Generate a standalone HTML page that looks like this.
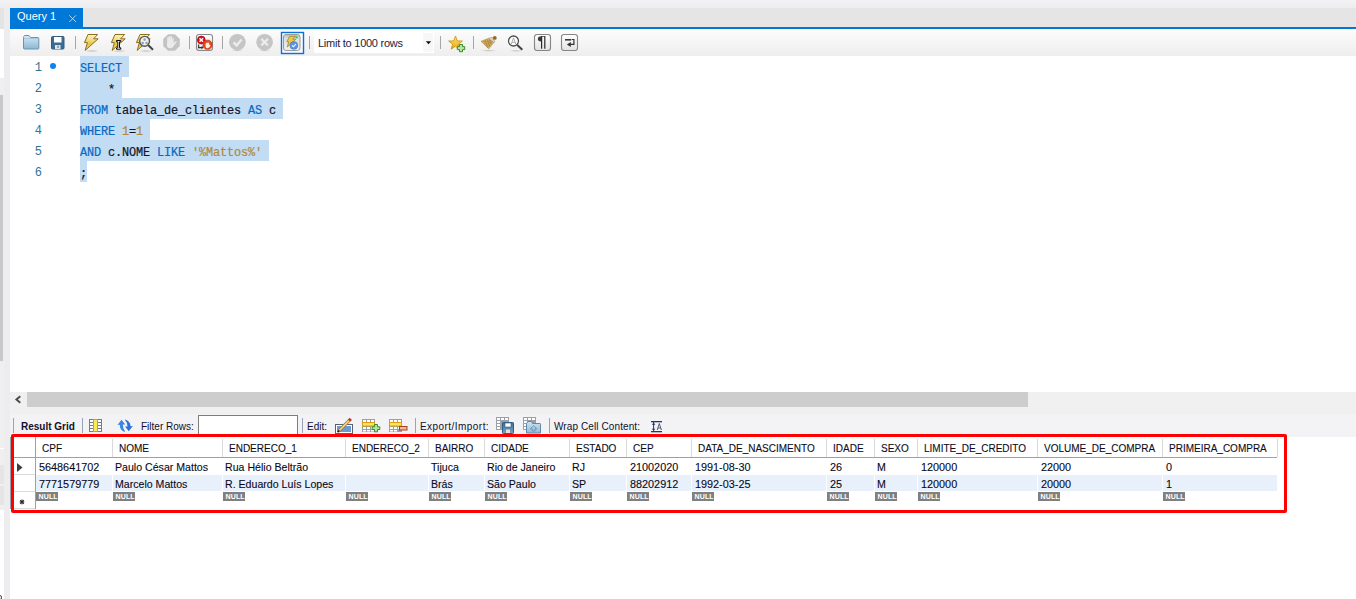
<!DOCTYPE html>
<html><head><meta charset="utf-8">
<style>
*{box-sizing:border-box}
html,body{margin:0;padding:0}
body{width:1356px;height:599px;overflow:hidden;position:relative;background:#fff;font-family:"Liberation Sans",sans-serif}
.a{position:absolute}
.sep{position:absolute;width:1px;background:#a9a9a9}
.mono{font-family:"Liberation Mono",monospace}
#code div{position:absolute;left:0;height:21px;white-space:pre;-webkit-text-stroke:0.2px currentColor}
.k{color:#0569c4}
.s{color:#b0893e}
.i{color:#14142a}
.sel{position:absolute;background:#c1dcf3}
.ln{position:absolute;left:26px;width:16px;text-align:right;color:#2f7391;font-size:12px}
.tb{font-size:10px;color:#10102a;position:absolute;white-space:nowrap}
.hd{position:absolute;top:437px;height:20px;font-size:10px;color:#0c0c20;white-space:nowrap;-webkit-text-stroke:0.1px #0c0c20}
.cell{position:absolute;font-size:10.5px;color:#080818;white-space:nowrap;-webkit-text-stroke:0.1px #080818}
.null{position:absolute;top:492px;width:22px;height:9px;background:#808080;color:#fff;font-size:7px;font-weight:bold;line-height:9px;padding-left:2.5px;letter-spacing:0.15px}
.vl{position:absolute;top:439px;height:18px;width:1px;background:#dadada}
</style></head>
<body>
<!-- top strip -->
<div class="a" style="left:0;top:0;width:1356px;height:8px;background:linear-gradient(#f3f3f5,#ededf0)"></div>
<!-- left strip -->
<div class="a" style="left:0;top:8px;width:10px;height:591px;background:#ededf0"></div>
<div class="a" style="left:0;top:8px;width:4px;height:21px;background:#e4e4e4"></div>
<div class="a" style="left:0;top:29px;width:4px;height:49px;background:#fff"></div>
<div class="a" style="left:0;top:78px;width:4px;height:17px;background:#efefef"></div>
<div class="a" style="left:0;top:95px;width:3px;height:266px;background:#c8c8c8"></div>
<div class="a" style="left:0;top:361px;width:4px;height:149px;background:#efefef"></div>
<div class="a" style="left:0;top:448px;width:4px;height:1px;background:#fff"></div>
<div class="a" style="left:0;top:465px;width:4px;height:19px;background:#e5e5e5"></div>
<div class="a" style="left:0;top:486px;width:4px;height:19px;background:#e5e5e5"></div>
<div class="a" style="left:0;top:510px;width:4px;height:89px;background:#fff"></div>
<div class="a" style="left:10px;top:437px;width:1px;height:72px;background:#9aa0a8"></div>
<div class="a" style="left:-2px;top:595px;width:4px;height:5px;border:1px solid #4a4a5a;border-radius:2px;background:#f4f0e0"></div>

<!-- tab bar -->
<div class="a" style="left:10px;top:8px;width:1346px;height:19px;background:#e5e5e5"></div>
<div class="a" style="left:10px;top:27px;width:1346px;height:2px;background:#0078d7"></div>
<div class="a" style="left:10px;top:8px;width:73px;height:21px;background:#0078d7"></div>
<div class="a" style="left:17px;top:8.4px;font-size:11px;color:#fff;line-height:16px">Query 1</div>
<svg class="a" style="left:69px;top:15px" width="8" height="8" viewBox="0 0 8 8"><path d="M0.3 0.3L7 7M7 0.3L0.3 7" stroke="#c4dcf4" stroke-width="0.9"/></svg>

<!-- toolbar -->
<div class="a" style="left:10px;top:29px;width:1346px;height:27px;background:linear-gradient(#fcfcfc,#eeeeee)"></div>
<svg class="a" style="left:0;top:0" width="600" height="56" viewBox="0 0 600 56">
<defs>
<linearGradient id="gFold" x1="0" y1="0" x2="0" y2="1"><stop offset="0" stop-color="#d6e9f6"/><stop offset="1" stop-color="#8db6d3"/></linearGradient>
<linearGradient id="gBolt" x1="0" y1="0" x2="0" y2="1"><stop offset="0" stop-color="#fbf3c8"/><stop offset="0.35" stop-color="#f0dc80"/><stop offset="0.6" stop-color="#e3c448"/><stop offset="1" stop-color="#f0dc80"/></linearGradient>
<linearGradient id="gBtn" x1="0" y1="0" x2="0" y2="1"><stop offset="0" stop-color="#ffffff"/><stop offset="1" stop-color="#e2e2e2"/></linearGradient>
<linearGradient id="gAc" x1="0" y1="0" x2="0" y2="1"><stop offset="0" stop-color="#bdbdbd"/><stop offset="0.25" stop-color="#dedede"/><stop offset="1" stop-color="#efefef"/></linearGradient>
<linearGradient id="gStar" x1="0" y1="0" x2="0" y2="1"><stop offset="0" stop-color="#fbe27a"/><stop offset="0.5" stop-color="#f5c838"/><stop offset="1" stop-color="#e8a018"/></linearGradient>
<radialGradient id="gShadow" cx="0.5" cy="0.5" r="0.5"><stop offset="0" stop-color="#000" stop-opacity="0.18"/><stop offset="1" stop-color="#000" stop-opacity="0"/></radialGradient>
</defs>
<!-- folder -->
<path d="M23.5 37.5Q23.5 36.5 24.5 35.5L29 35.5L30.5 37.5L38 37.5Q38.8 37.5 38.8 38.5L38.8 48.2Q38.8 49 38 49L24.5 49Q23.5 49 23.5 48Z" fill="url(#gFold)" stroke="#6b94b3" stroke-width="1"/>
<path d="M24 38.5L38.3 38.5" stroke="#a9c9e0" stroke-width="1"/>
<!-- floppy -->
<rect x="51.5" y="36.5" width="12.5" height="12.5" rx="1" fill="#3e6c91" stroke="#335c7c" stroke-width="1"/>
<rect x="54" y="37" width="7.5" height="5.5" fill="#ffffff"/>
<rect x="55" y="45" width="5.5" height="4" fill="#dfe6ec"/>
<rect x="57.5" y="45.5" width="1" height="2.5" fill="#3e6c91"/>
<!-- sep -->
<rect x="75" y="36" width="1" height="13" fill="#a6a6a6"/>
<!-- bolt 1 -->
<ellipse cx="92" cy="51" rx="7" ry="1.6" fill="url(#gShadow)"/>
<path d="M88 34.5L97.6 34.5L93.6 38.8L98.2 38.8L85.2 50.4L87.4 42.6L84.4 42.6Z" fill="url(#gBolt)" stroke="#8e6d1e" stroke-width="1"/>
<!-- bolt 2 w/ cursor -->
<ellipse cx="119" cy="51" rx="7" ry="1.6" fill="url(#gShadow)"/>
<path transform="translate(27 0)" d="M88 34.5L97.6 34.5L93.6 38.8L98.2 38.8L85.2 50.4L87.4 42.6L84.4 42.6Z" fill="url(#gBolt)" stroke="#8e6d1e" stroke-width="1"/>
<path d="M116.5 40.5L120.8 40.5L120.8 41.8L119.5 41.8L119.5 47.8L120.8 47.8L120.8 49.2L116.5 49.2L116.5 47.8L117.8 47.8L117.8 41.8L116.5 41.8Z" fill="#fff" stroke="#111" stroke-width="1"/>
<!-- bolt 3 w/ magnifier -->
<ellipse cx="146" cy="51" rx="7" ry="1.6" fill="url(#gShadow)"/>
<path transform="translate(52 0)" d="M88 34.5L97.6 34.5L93.6 38.8L98.2 38.8L85.2 50.4L87.4 42.6L84.4 42.6Z" fill="url(#gBolt)" stroke="#8e6d1e" stroke-width="1"/>
<circle cx="144.6" cy="41.3" r="4.9" fill="#f7f2d8" stroke="#555" stroke-width="1.4"/>
<circle cx="144.6" cy="39.6" r="1.3" fill="#7ea6dc"/>
<circle cx="142.7" cy="43" r="1.3" fill="#7ea6dc"/>
<circle cx="146.6" cy="43" r="1.3" fill="#7ea6dc"/>
<path d="M148.3 45.2L153 49.7" stroke="#444" stroke-width="2"/>
<!-- stop hand gray -->
<path d="M168 34.2L175 34.2L179.8 39L179.8 46L175 50.8L168 50.8L163.2 46L163.2 39Z" fill="#c3c3c3"/>
<path d="M167.2 40.5L167.2 37.5Q167.2 37 168 37Q168.6 37 168.6 37.5L168.6 40L168.8 36.5Q168.8 35.9 169.6 35.9Q170.3 35.9 170.3 36.5L170.3 40L170.6 36.7Q170.6 36.1 171.3 36.1Q172 36.1 172 36.8L172 41L172.4 38.3Q172.5 37.7 173.1 37.7Q173.7 37.8 173.7 38.4L173.7 43L175.4 41.3Q176 40.7 176.6 41.2Q177 41.7 176.5 42.3L173.2 46.8Q172.2 48.3 170.2 48.3Q166.9 48.3 166.9 45Z" fill="#eaeaea"/>
<!-- sep -->
<rect x="189" y="36" width="1" height="13" fill="#a6a6a6"/>
<!-- stop on error -->
<rect x="196.5" y="34.5" width="16" height="16" rx="2.5" fill="url(#gBtn)" stroke="#8a8a8a" stroke-width="1.1"/>
<circle cx="201.3" cy="40" r="3.9" fill="#d8101c" stroke="#a8000c" stroke-width="0.7"/>
<path d="M199.5 38.2L203.1 41.8M203.1 38.2L199.5 41.8" stroke="#fff" stroke-width="1.5"/>
<path d="M205.6 40.2L209.4 40.2L212 42.8L212 46.6L209.4 49.2L205.6 49.2L203 46.6L203 42.8Z" fill="#ea4a1a" stroke="#c02a0a" stroke-width="0.7"/>
<path d="M205.7 47Q205.3 44.3 205.9 43.3Q206.5 42.4 207.5 42.8Q208.5 42.2 209.1 43.2L209.3 44.9Q210.3 44.3 210.5 45.3Q210 48 207.7 48.2Q206 48.2 205.7 47Z" fill="#fbeee8"/>
<path d="M198.6 44.6L198.6 47.6L202.2 47.6" stroke="#333" stroke-width="1.1" fill="none"/>
<path d="M203.6 47.6L201.6 46L201.6 49.2Z" fill="#333"/>
<!-- sep -->
<rect x="222" y="36" width="1" height="13" fill="#a6a6a6"/>
<!-- check circle gray -->
<ellipse cx="237.4" cy="50.5" rx="6" ry="1.2" fill="url(#gShadow)"/>
<circle cx="237.4" cy="42.2" r="8.3" fill="#c5c5c5"/>
<path d="M233.6 42.3L236.6 45.4L241.6 39.4" stroke="#ececec" stroke-width="2.4" fill="none"/>
<!-- x circle gray -->
<ellipse cx="264.6" cy="50.5" rx="6" ry="1.2" fill="url(#gShadow)"/>
<circle cx="264.6" cy="42.2" r="8.3" fill="#c5c5c5"/>
<path d="M261.3 38.9L267.9 45.5M267.9 38.9L261.3 45.5" stroke="#ececec" stroke-width="2.2"/>
<!-- autocommit selected -->
<rect x="281.5" y="32.5" width="22" height="21" fill="#ffffff" fill-opacity="0.6" stroke="#0a72d6" stroke-width="1.4"/>
<rect x="283.5" y="34.5" width="16.5" height="16" rx="2.5" fill="url(#gAc)" stroke="#9a9a9a" stroke-width="1"/>
<path d="M289.5 36.3L295.5 36.3L292.8 39.2L295.8 39.2L287.3 47L288.7 41.8L286.8 41.8Z" fill="#e8c850" stroke="#9a7a20" stroke-width="0.7"/>
<circle cx="293.9" cy="45.4" r="3.9" fill="#5b95e0" stroke="#3f78c4" stroke-width="0.6"/>
<path d="M292 45.4L293.4 46.8L295.9 44" stroke="#fff" stroke-width="1.1" fill="none"/>
<circle cx="296.6" cy="37.4" r="1.1" fill="#34c634"/>
<!-- sep -->
<rect x="309" y="36" width="1" height="13" fill="#a6a6a6"/>
<!-- combo -->
<rect x="314" y="32" width="120" height="21" fill="#ffffff"/>
<rect x="423" y="33" width="10" height="19" fill="#f7f7f7"/>
<path d="M425.8 41.2L431.2 41.2L428.5 44.2Z" fill="#111"/>
<!-- sep -->
<rect x="440" y="36" width="1" height="13" fill="#a6a6a6"/>
<!-- star plus -->
<path d="M455.5 36.0L457.3 40.9L462.4 41.0L458.4 44.2L459.8 49.2L455.5 46.3L451.2 49.2L452.6 44.2L448.6 41.0L453.7 40.9Z" fill="url(#gStar)" stroke="#c98c12" stroke-width="0.8" stroke-linejoin="round"/>
<path d="M459.5 44.5L462.5 44.5L462.5 46.6L464.7 46.6L464.7 49.6L462.5 49.6L462.5 51.7L459.5 51.7L459.5 49.6L457.3 49.6L457.3 46.6L459.5 46.6Z" fill="#b4e6a0" stroke="#3f8a2c" stroke-width="1"/>
<!-- sep -->
<rect x="473" y="36" width="1" height="13" fill="#a6a6a6"/>
<!-- broom -->
<ellipse cx="488.5" cy="50.6" rx="8.5" ry="1.3" fill="url(#gShadow)"/>
<path d="M481 41.3L488.6 38.3L493.8 42.6L488.8 48.8Z" fill="#dbb565" stroke="#a27c36" stroke-width="0.5"/>
<path d="M482.5 41.8L491.6 40.6M484 43.8L492.6 41.9M485.6 45.6L491.8 43.6M487.2 47.3L490.6 45.6M485 40L487.5 47.8M487.2 39.2L489.6 46M489.2 39.3L491 43.6" stroke="#9c7630" stroke-width="0.55" fill="none"/>
<path d="M488.6 38.3Q491 37 492.6 37.6L494.9 41.4Q494.7 42.6 493.8 42.6Z" fill="#d8d2c2" stroke="#8e8a7a" stroke-width="0.5"/>
<circle cx="494.8" cy="37.9" r="1.9" fill="#9c6818"/>
<!-- magnifier A -->
<ellipse cx="516" cy="50.8" rx="7" ry="1.2" fill="url(#gShadow)"/>
<circle cx="513.5" cy="41" r="5" fill="#ffffff" stroke="#505050" stroke-width="1.3"/>
<path d="M511.3 44L513.5 37.8L515.7 44M512 42.3L515 42.3" stroke="#9a9a9a" stroke-width="0.8" fill="none"/>
<path d="M517.3 45L522.3 49.8" stroke="#444" stroke-width="2"/>
<!-- pilcrow btn -->
<rect x="534.5" y="34.5" width="16" height="16" rx="2.5" fill="url(#gBtn)" stroke="#858585" stroke-width="1.1"/>
<path d="M541.2 36.2L545.2 36.2L545.2 36.9L541.2 36.9Z" fill="#333"/>
<path d="M541 36.2Q537.8 36.5 537.8 39Q537.8 41.3 541 41.5Z" fill="#3a3a3a"/>
<rect x="541" y="36.2" width="1.2" height="12.5" fill="#2a2a2a"/>
<rect x="544.2" y="36.2" width="1.2" height="12.5" fill="#2a2a2a"/>
<!-- wrap btn -->
<rect x="561.5" y="34.5" width="16" height="16" rx="2.5" fill="url(#gBtn)" stroke="#858585" stroke-width="1.1"/>
<rect x="565" y="39" width="6.2" height="1.6" fill="#3a3a3a"/>
<path d="M571.8 39.5L573.9 39.5L573.9 44.4L569.8 44.4" stroke="#333" stroke-width="1.2" fill="none"/>
<path d="M566.8 44.4L570.8 41.9L570.8 46.9Z" fill="#333"/>
</svg>
<div class="tb" style="left:318px;top:37px;font-size:11px;color:#1d1d3a;letter-spacing:-0.25px;line-height:12px">Limit to 1000 rows</div>


<!-- editor -->
<div class="a" style="left:10px;top:56px;width:1346px;height:336px;background:#fff"></div>
<div class="sel" style="left:80px;top:56px;width:49px;height:21px"></div>
<div class="sel" style="left:80px;top:77px;width:42px;height:21px"></div>
<div class="sel" style="left:80px;top:98px;width:203px;height:21px"></div>
<div class="sel" style="left:80px;top:119px;width:70px;height:21px"></div>
<div class="sel" style="left:80px;top:140px;width:189px;height:21px"></div>
<div class="sel" style="left:80px;top:161px;width:7px;height:21px"></div>
<div class="ln mono" style="top:58px;line-height:21px">1</div>
<div class="ln mono" style="top:79px;line-height:21px">2</div>
<div class="ln mono" style="top:100px;line-height:21px">3</div>
<div class="ln mono" style="top:121px;line-height:21px">4</div>
<div class="ln mono" style="top:142px;line-height:21px">5</div>
<div class="ln mono" style="top:163px;line-height:21px">6</div>
<div class="a" style="left:50px;top:63px;width:6px;height:6px;border-radius:50%;background:#0a84f0"></div>
<div id="code" class="a mono" style="left:80px;top:58.5px;font-size:11.9px;letter-spacing:-0.14px">
<div style="top:0px;line-height:21px"><span class="k">SELECT</span></div>
<div style="top:21px;line-height:21px">    <span class="i">*</span></div>
<div style="top:42px;line-height:21px"><span class="k">FROM</span> <span class="i">tabela_de_clientes</span> <span class="k">AS</span> <span class="i">c</span></div>
<div style="top:63px;line-height:21px"><span class="k">WHERE</span> <span class="s">1</span><span class="i">=</span><span class="s">1</span></div>
<div style="top:84px;line-height:21px"><span class="k">AND</span> <span class="i">c.NOME</span> <span class="k">LIKE</span> <span class="s">'%Mattos%'</span></div>
<div style="top:105px;line-height:21px"><span class="i">;</span></div>
</div>

<!-- h scrollbar -->
<div class="a" style="left:10px;top:392px;width:1346px;height:22px;background:#f0f0f0"></div>
<div class="a" style="left:27px;top:392px;width:1001px;height:15px;background:#cdcdcd"></div>
<svg class="a" style="left:14px;top:395px" width="8" height="9" viewBox="0 0 8 9"><path d="M6.3 1.2L2.4 4.5L6.3 7.8" stroke="#4a4a4a" stroke-width="1.9" fill="none"/></svg>

<!-- results toolbar -->
<div class="a" style="left:10px;top:414px;width:1346px;height:23px;background:#f3f3f6"></div>
<svg class="a" style="left:0;top:410px" width="700" height="27" viewBox="0 410 700 27">
<defs>
<linearGradient id="gFold2" x1="0" y1="0" x2="0" y2="1"><stop offset="0" stop-color="#cde3f2"/><stop offset="1" stop-color="#94bad6"/></linearGradient>
<linearGradient id="gFlop2" x1="0" y1="0" x2="0" y2="1"><stop offset="0" stop-color="#3d6b90"/><stop offset="1" stop-color="#7aa2c0"/></linearGradient>
</defs>
<rect x="13" y="418" width="1" height="15" fill="#9aa4b6"/>
<rect x="82" y="418" width="1" height="15" fill="#9aa4b6"/>
<!-- grid icon -->
<rect x="89" y="419" width="13" height="13" fill="#747c86"/>
<g fill="#ffffff">
<rect x="90" y="420" width="3" height="2"/><rect x="90" y="423" width="3" height="2"/><rect x="90" y="426" width="3" height="2"/><rect x="90" y="429" width="3" height="2"/>
<rect x="98" y="420" width="3" height="2"/><rect x="98" y="423" width="3" height="2"/><rect x="98" y="426" width="3" height="2"/><rect x="98" y="429" width="3" height="2"/>
</g>
<rect x="93.5" y="419.5" width="4" height="12" fill="#fde85a" stroke="#e09a10" stroke-width="1"/>
<!-- refresh -->
<path d="M124.5 432Q119.5 430 119.8 424.8L117.5 425L121.5 419.8L125.3 424.6L122.8 424.6Q122.8 428.5 125 431.5Z" fill="#3a86e0"/>
<path d="M125 419.5Q130.3 421 130.5 426.2L132.8 426L128.8 431.2L125 426.4L127.5 426.4Q127.5 422.5 125 420Z" fill="#2f6fd8"/>
<!-- filter input -->
<rect x="198.5" y="415.5" width="99" height="22" fill="#ffffff" stroke="#7d7d7d" stroke-width="1"/>
<rect x="302" y="418" width="1" height="15" fill="#9aa4b6"/>
<!-- edit icon -->
<rect x="335.5" y="424.5" width="17" height="9" fill="#ffffff" stroke="#5a6068" stroke-width="1"/>
<rect x="337" y="426" width="14" height="6" fill="#6a9ad6"/>
<path d="M338.6 431.2L349 420.6" stroke="#a27a34" stroke-width="3.2" stroke-linecap="butt"/>
<path d="M338.6 431.2L349 420.6" stroke="#f2d88a" stroke-width="1.6"/>
<path d="M349 420.6L350.8 418.8" stroke="#c8302a" stroke-width="3.2"/>
<path d="M337.6 432.2L339.4 430.4" stroke="#222" stroke-width="1.6"/>
<!-- add row -->
<rect x="362" y="419" width="13" height="13" fill="#9aa0a8"/>
<g fill="#fff">
<rect x="363" y="420" width="3" height="2"/><rect x="367" y="420" width="3" height="2"/><rect x="371" y="420" width="3" height="2"/>
<rect x="363" y="427" width="3" height="2"/><rect x="367" y="427" width="3" height="2"/><rect x="371" y="427" width="3" height="2"/>
<rect x="363" y="430" width="3" height="1.5"/><rect x="367" y="430" width="3" height="1.5"/><rect x="371" y="430" width="3" height="1.5"/>
</g>
<rect x="362.5" y="422.5" width="12" height="3.5" fill="#fde85a" stroke="#e09a10" stroke-width="1"/>
<path d="M374.5 424.5L377.5 424.5L377.5 426.8L379.8 426.8L379.8 429.5L377.5 429.5L377.5 431.8L374.5 431.8L374.5 429.5L372.2 429.5L372.2 426.8L374.5 426.8Z" fill="#b2e69c" stroke="#3f8a2c" stroke-width="1"/>
<!-- del row -->
<rect x="389" y="419" width="13" height="13" fill="#9aa0a8"/>
<g fill="#fff">
<rect x="390" y="420" width="3" height="2"/><rect x="394" y="420" width="3" height="2"/><rect x="398" y="420" width="3" height="2"/>
<rect x="390" y="427" width="3" height="2"/><rect x="394" y="427" width="3" height="2"/><rect x="398" y="427" width="3" height="2"/>
<rect x="390" y="430" width="3" height="1.5"/><rect x="394" y="430" width="3" height="1.5"/>
</g>
<rect x="389.5" y="422.5" width="12" height="3.5" fill="#fde85a" stroke="#e09a10" stroke-width="1"/>
<rect x="399.5" y="426.5" width="7.5" height="3.5" fill="#f8b898" stroke="#a8401a" stroke-width="1"/>
<rect x="415" y="418" width="1" height="15" fill="#9aa4b6"/>
<!-- export -->
<rect x="496" y="417" width="13" height="13" fill="#9aa0a8"/>
<g fill="#fff">
<rect x="497" y="418" width="3" height="2"/><rect x="501" y="418" width="3" height="2"/><rect x="505" y="418" width="3" height="2"/>
<rect x="497" y="421" width="3" height="2"/><rect x="497" y="424" width="3" height="2"/><rect x="497" y="427" width="3" height="2"/>
</g>
<rect x="502.5" y="422.5" width="11" height="11" rx="0.8" fill="url(#gFlop2)" stroke="#2f5f84" stroke-width="1"/>
<rect x="505" y="423" width="6" height="4" fill="#fff" stroke="#2f5f84" stroke-width="0.6"/>
<rect x="506" y="429.5" width="4" height="3.5" fill="#e0e0e0"/>
<!-- import -->
<rect x="523" y="417" width="13" height="13" fill="#9aa0a8"/>
<g fill="#fff">
<rect x="524" y="418" width="3" height="2"/><rect x="528" y="418" width="3" height="2"/><rect x="532" y="418" width="3" height="2"/>
<rect x="524" y="421" width="3" height="2"/><rect x="524" y="424" width="3" height="2"/><rect x="524" y="427" width="3" height="2"/>
</g>
<path d="M526.5 423.5L527.8 421.5L531.5 421.5L532.5 423.5L540 423.5Q540.5 423.5 540.5 424.2L540.5 433L526.5 433Z" fill="url(#gFold2)" stroke="#5d8aab" stroke-width="1"/>
<path d="M533.6 425.8L536.8 428.8L535 428.8L535 431L532.2 431L532.2 428.8L530.4 428.8Z" fill="none" stroke="#5d8aab" stroke-width="0.8"/>
<rect x="549" y="418" width="1" height="15" fill="#9aa4b6"/>
<!-- wrap icon -->
<g stroke="#26385a" fill="#26385a">
<rect x="651" y="421" width="11" height="1.3" stroke="none"/>
<rect x="651" y="431" width="11" height="1.3" stroke="none"/>
<rect x="653.1" y="422" width="1" height="9.5" stroke="none"/>
<path d="M651.8 424.8L653.6 422.8L655.4 424.8Z" stroke="none"/>
<path d="M651.8 428.7L653.6 430.7L655.4 428.7Z" stroke="none"/>
<path d="M657.2 430L659.3 423.5L661.4 430M658 428L660.6 428" fill="none" stroke-width="0.8"/>
</g>
</svg>
<div class="tb" style="left:21px;top:421px;font-weight:bold;font-size:10px;line-height:11px">Result Grid</div>
<div class="tb" style="left:141px;top:421px;line-height:11px">Filter Rows:</div>
<div class="tb" style="left:307px;top:421px;line-height:11px">Edit:</div>
<div class="tb" style="left:420px;top:421px;line-height:11px;letter-spacing:0.45px">Export/Import:</div>
<div class="tb" style="left:554px;top:421px;line-height:11px;letter-spacing:0.1px">Wrap Cell Content:</div>


<!-- grid -->
<div class="a" style="left:11px;top:437px;width:1345px;height:162px;background:#fff"></div>
<div class="a" style="left:14px;top:457px;width:1263px;height:1px;background:#a0a0a0"></div>
<div class="a" style="left:35px;top:437px;width:1px;height:72px;background:#a0a0a0"></div>
<div class="a" style="left:14px;top:474px;width:21px;height:1px;background:#dcdcdc"></div>
<div class="a" style="left:14px;top:491px;width:21px;height:1px;background:#dcdcdc"></div>
<div class="a" style="left:14px;top:508px;width:21px;height:1px;background:#dcdcdc"></div>
<div class="a" style="left:36px;top:475px;width:76px;height:16px;background:#e8f0fb"></div>
<div class="a" style="left:113px;top:475px;width:109px;height:16px;background:#e8f0fb"></div>
<div class="a" style="left:223px;top:475px;width:122px;height:16px;background:#e8f0fb"></div>
<div class="a" style="left:346px;top:475px;width:82px;height:16px;background:#e8f0fb"></div>
<div class="a" style="left:429px;top:475px;width:55px;height:16px;background:#e8f0fb"></div>
<div class="a" style="left:485px;top:475px;width:84px;height:16px;background:#e8f0fb"></div>
<div class="a" style="left:570px;top:475px;width:56px;height:16px;background:#e8f0fb"></div>
<div class="a" style="left:627px;top:475px;width:64px;height:16px;background:#e8f0fb"></div>
<div class="a" style="left:692px;top:475px;width:134px;height:16px;background:#e8f0fb"></div>
<div class="a" style="left:827px;top:475px;width:47px;height:16px;background:#e8f0fb"></div>
<div class="a" style="left:875px;top:475px;width:42px;height:16px;background:#e8f0fb"></div>
<div class="a" style="left:918px;top:475px;width:119px;height:16px;background:#e8f0fb"></div>
<div class="a" style="left:1038px;top:475px;width:124px;height:16px;background:#e8f0fb"></div>
<div class="a" style="left:1163px;top:475px;width:114px;height:16px;background:#e8f0fb"></div>
<div class="hd" style="left:42px;line-height:20px;top:438.5px">CPF</div>
<div class="cell" style="left:39px;top:461px;font-size:10.85px">5648641702</div>
<div class="cell" style="left:39px;top:477.5px;font-size:10.85px">7771579779</div>
<div class="null" style="left:36px">NULL</div>
<div class="vl" style="left:112px"></div>
<div class="hd" style="left:119px;line-height:20px;top:438.5px">NOME</div>
<div class="cell" style="left:115px;top:461px;font-size:10.6px">Paulo César Mattos</div>
<div class="cell" style="left:115px;top:477.5px;font-size:10.6px">Marcelo Mattos</div>
<div class="null" style="left:113px">NULL</div>
<div class="vl" style="left:222px"></div>
<div class="hd" style="left:229px;line-height:20px;top:438.5px">ENDERECO_1</div>
<div class="cell" style="left:225px;top:461px;font-size:10.6px">Rua Hélio Beltrão</div>
<div class="cell" style="left:225px;top:477.5px;font-size:10.6px">R. Eduardo Luís Lopes</div>
<div class="null" style="left:223px">NULL</div>
<div class="vl" style="left:345px"></div>
<div class="hd" style="left:352px;line-height:20px;top:438.5px">ENDERECO_2</div>
<div class="null" style="left:346px">NULL</div>
<div class="vl" style="left:428px"></div>
<div class="hd" style="left:435px;line-height:20px;top:438.5px">BAIRRO</div>
<div class="cell" style="left:431px;top:461px;font-size:10.6px">Tijuca</div>
<div class="cell" style="left:431px;top:477.5px;font-size:10.6px">Brás</div>
<div class="null" style="left:429px">NULL</div>
<div class="vl" style="left:484px"></div>
<div class="hd" style="left:491px;line-height:20px;top:438.5px">CIDADE</div>
<div class="cell" style="left:487px;top:461px;font-size:10.6px">Rio de Janeiro</div>
<div class="cell" style="left:487px;top:477.5px;font-size:10.6px">São Paulo</div>
<div class="null" style="left:485px">NULL</div>
<div class="vl" style="left:569px"></div>
<div class="hd" style="left:576px;line-height:20px;top:438.5px">ESTADO</div>
<div class="cell" style="left:572px;top:461px;font-size:10.6px">RJ</div>
<div class="cell" style="left:572px;top:477.5px;font-size:10.6px">SP</div>
<div class="null" style="left:570px">NULL</div>
<div class="vl" style="left:626px"></div>
<div class="hd" style="left:633px;line-height:20px;top:438.5px">CEP</div>
<div class="cell" style="left:630px;top:461px;font-size:10.85px">21002020</div>
<div class="cell" style="left:630px;top:477.5px;font-size:10.85px">88202912</div>
<div class="null" style="left:627px">NULL</div>
<div class="vl" style="left:691px"></div>
<div class="hd" style="left:698px;line-height:20px;top:438.5px">DATA_DE_NASCIMENTO</div>
<div class="cell" style="left:695px;top:461px;font-size:10.85px">1991-08-30</div>
<div class="cell" style="left:695px;top:477.5px;font-size:10.85px">1992-03-25</div>
<div class="null" style="left:692px">NULL</div>
<div class="vl" style="left:826px"></div>
<div class="hd" style="left:833px;line-height:20px;top:438.5px">IDADE</div>
<div class="cell" style="left:830px;top:461px;font-size:10.85px">26</div>
<div class="cell" style="left:830px;top:477.5px;font-size:10.85px">25</div>
<div class="null" style="left:827px">NULL</div>
<div class="vl" style="left:874px"></div>
<div class="hd" style="left:881px;line-height:20px;top:438.5px">SEXO</div>
<div class="cell" style="left:877px;top:461px;font-size:10.6px">M</div>
<div class="cell" style="left:877px;top:477.5px;font-size:10.6px">M</div>
<div class="null" style="left:875px">NULL</div>
<div class="vl" style="left:917px"></div>
<div class="hd" style="left:924px;line-height:20px;top:438.5px">LIMITE_DE_CREDITO</div>
<div class="cell" style="left:921px;top:461px;font-size:10.85px">120000</div>
<div class="cell" style="left:921px;top:477.5px;font-size:10.85px">120000</div>
<div class="null" style="left:918px">NULL</div>
<div class="vl" style="left:1037px"></div>
<div class="hd" style="left:1044px;line-height:20px;top:438.5px">VOLUME_DE_COMPRA</div>
<div class="cell" style="left:1041px;top:461px;font-size:10.85px">22000</div>
<div class="cell" style="left:1041px;top:477.5px;font-size:10.85px">20000</div>
<div class="null" style="left:1038px">NULL</div>
<div class="vl" style="left:1162px"></div>
<div class="hd" style="left:1169px;line-height:20px;top:438.5px">PRIMEIRA_COMPRA</div>
<div class="cell" style="left:1166px;top:461px;font-size:10.85px">0</div>
<div class="cell" style="left:1166px;top:477.5px;font-size:10.85px">1</div>
<div class="null" style="left:1163px">NULL</div>
<div class="vl" style="left:1277px"></div>
<svg class="a" style="left:17px;top:463px" width="6" height="9" viewBox="0 0 6 9"><path d="M0 0L5.5 4.5L0 9Z" fill="#3c3c3c"/></svg>
<svg class="a" style="left:19px;top:499px" width="6" height="6" viewBox="0 0 6 6"><circle cx="3" cy="3" r="2.4" fill="#6a6a6a"/><path d="M1.3 1.3L4.7 4.7M4.7 1.3L1.3 4.7" stroke="#2a2a2a" stroke-width="1"/></svg>

<!-- red box -->
<div class="a" style="left:11px;top:434px;width:1276px;height:79px;border:3px solid #ff0000;border-radius:2px"></div>
</body></html>
